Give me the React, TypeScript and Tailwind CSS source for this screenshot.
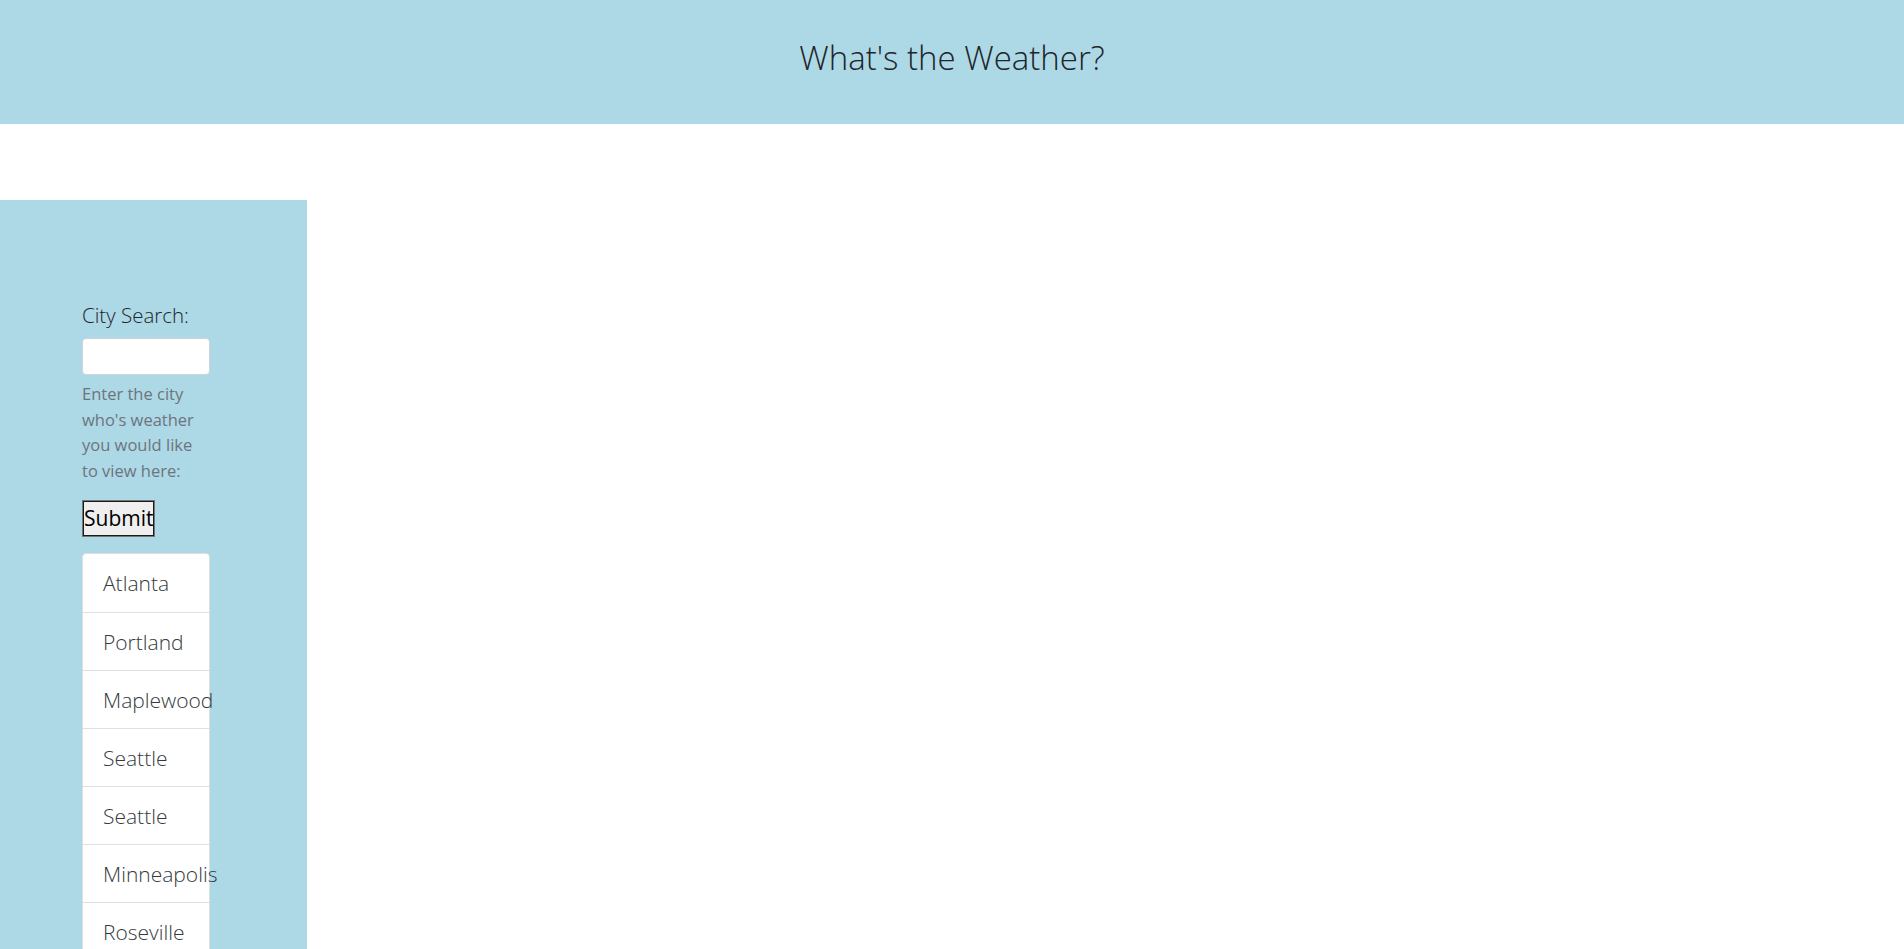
import React from "react";

const cities = ["Atlanta", "Portland", "Maplewood", "Seattle", "Seattle", "Minneapolis", "Roseville"];

export default function App() {
  return (
    <div className="min-h-screen bg-white font-['Open_Sans',sans-serif]">
      <header className="h-[124px] bg-[#add8e6] flex justify-center pt-[34px]">
        <h1 className="text-[33px] leading-[48px] font-light text-[#212529]">What's the Weather?</h1>
      </header>
      <div className="mt-[76px] flex">
        <aside className="w-[307px] bg-[#add8e6] pt-[100px] pl-[82px] pb-[40px]">
          <div className="w-[128px]">
            <label className="block text-[20.5px] leading-[30px] font-light text-[#212529] whitespace-nowrap">City Search:</label>
            <input type="text" className="mt-[8px] block w-[128px] h-[37px] bg-white border border-[#ced4da] rounded-[4px]" />
            <p className="mt-[6px] text-[16.5px] leading-[25.7px] text-[#6c757d] whitespace-nowrap">
              Enter the city<br />who's weather<br />you would like<br />to view here:
            </p>
            <button className="mt-[16px] block h-[37px] px-[1px] bg-[#efefef] border border-[#767676] shadow-[inset_0_0_0_1px_#1a1a1a] text-[21px] leading-[33px] text-black font-['Open_Sans',sans-serif]">
              Submit
            </button>
            <ul className="mt-[16px] w-[128px] bg-white border border-[#dfdfdf] rounded-[4px]">
              {cities.map((c, i) => (
                <li
                  key={i}
                  className={`h-[58px] pl-[20px] pt-[2px] flex items-center text-[21px] font-light text-[#343a40] whitespace-nowrap ${i > 0 ? "border-t border-[#dfdfdf]" : ""}`}
                >
                  {c}
                </li>
              ))}
            </ul>
          </div>
        </aside>
      </div>
    </div>
  );
}
